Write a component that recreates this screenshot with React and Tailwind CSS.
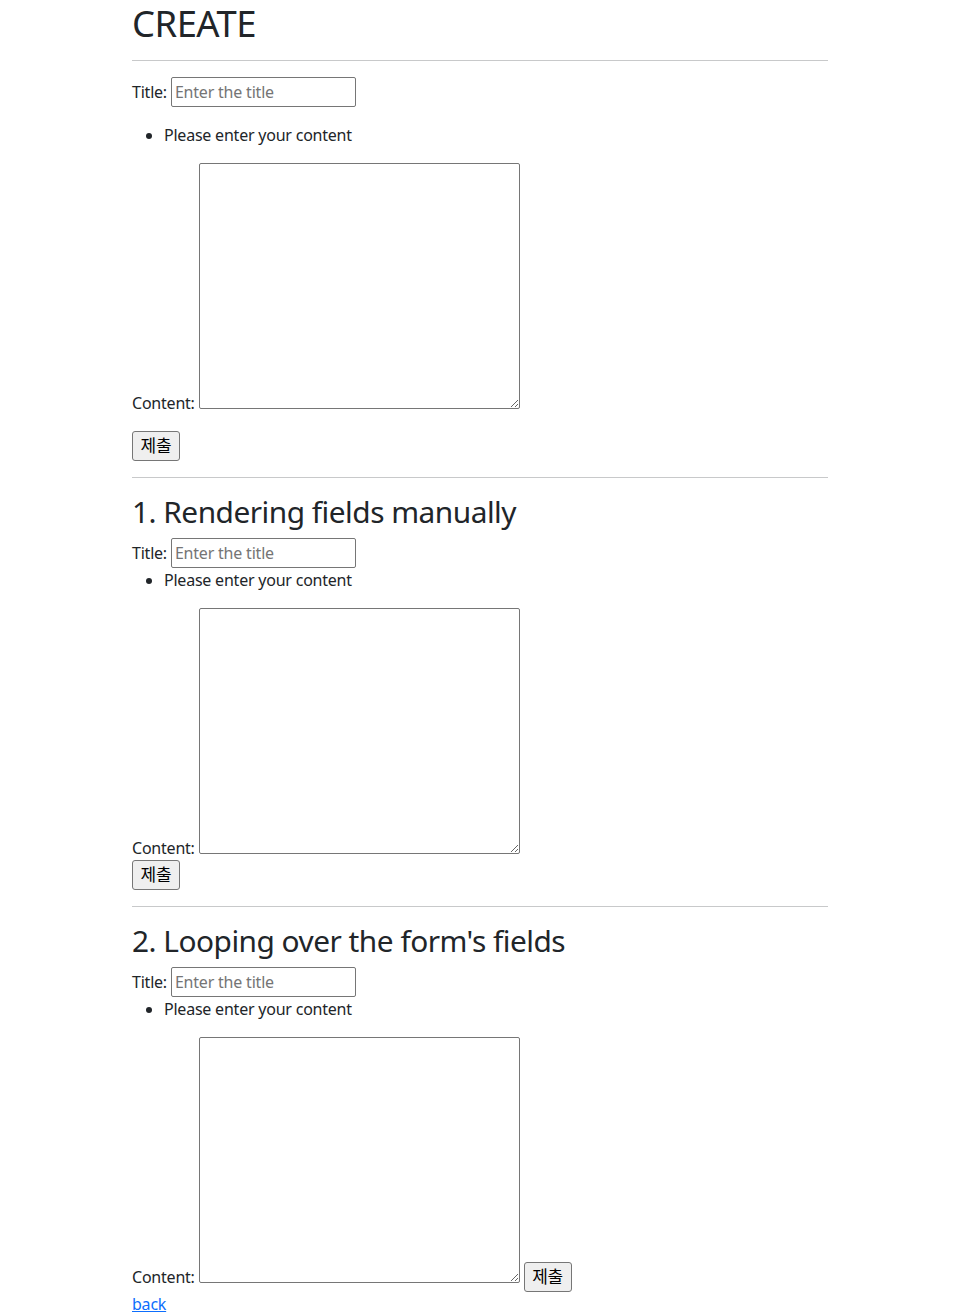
const inputCls = 'w-[185px] h-[30px] px-[3px] border border-[#767676] rounded-[2px] bg-white text-[16px] leading-[24px] tracking-[-0.2px] placeholder:text-[#757575] align-baseline';
const areaCls = 'w-[321px] h-[246px] border border-[#767676] rounded-[2px] bg-white resize align-baseline';
const btnCls = 'w-[48px] h-[30px] border border-[#767676] rounded-[3px] bg-[#efefef] text-black text-[17px] leading-[24px] align-baseline';

function TitleField() {
    return (
        <>
            <label htmlFor="id_title">Title:</label>{' '}
            <input type="text" placeholder="Enter the title" className={inputCls} />
        </>
    );
}

function HelpList() {
    return (
        <ul className="list-disc pl-8 mb-4">
            <li>Please enter your content</li>
        </ul>
    );
}

function ContentField() {
    return (
        <>
            <label>Content:</label>{' '}
            <textarea className={areaCls} />
        </>
    );
}

export default function App() {
    return (
        <div
            className="bg-white min-h-[1315px] text-[16px] leading-[1.5] tracking-[-0.22px] text-[#212529]"
            style={{ fontFamily: '"Noto Sans", "Noto Sans CJK KR", sans-serif' }}
        >
            <div className="w-[720px] mx-auto px-3">
                <h1 className="-mt-[2px] text-[36.4px] leading-[50px] font-normal tracking-[-0.5px]">CREATE</h1>
                <hr className="mt-[12px] mb-4 border-0 border-t border-[#c8c9ca]" />

                <form>
                    <p className="mb-4"><TitleField /></p>
                    <HelpList />
                    <p className="mb-4"><ContentField /></p>
                    <button type="submit" className={btnCls}>제출</button>
                </form>

                <hr className="my-4 border-0 border-t border-[#c8c9ca]" />
                <h2 className="text-[29.84px] leading-[1.2] font-normal tracking-[-0.5px] mb-2">1. Rendering fields manually</h2>
                <form>
                    <div><TitleField /></div>
                    <HelpList />
                    <div><ContentField /></div>
                    <div><button type="submit" className={btnCls}>제출</button></div>
                </form>

                <hr className="my-4 border-0 border-t border-[#c8c9ca]" />
                <h2 className="text-[29.84px] leading-[1.2] font-normal tracking-[-0.5px] mb-2">2. Looping over the form's fields</h2>
                <form>
                    <div><TitleField /></div>
                    <HelpList />
                    <div>
                        <ContentField />{' '}
                        <button type="submit" className={btnCls}>제출</button>
                    </div>
                </form>
                <a href="#" className="text-[#0d6efd] underline">back</a>
            </div>
        </div>
    );
}
